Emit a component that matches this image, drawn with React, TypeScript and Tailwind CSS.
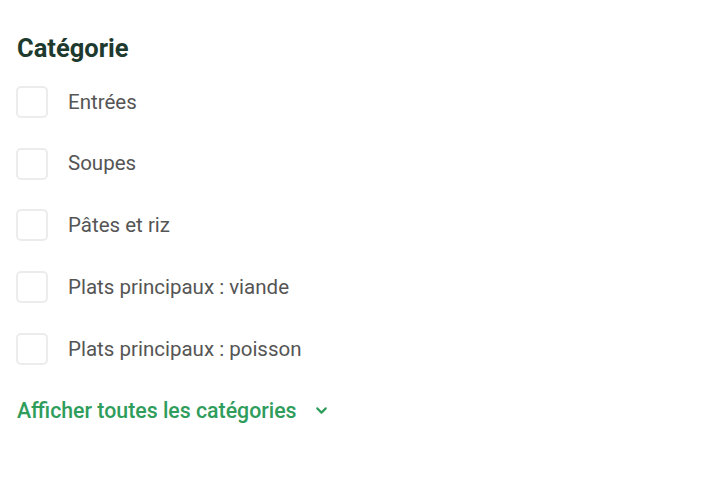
import { ChevronDown } from 'lucide-react';

const categories = [
  'Entrées',
  'Soupes',
  'Pâtes et riz',
  'Plats principaux : viande',
  'Plats principaux : poisson',
];

export default function App() {
  return (
    <div
      className="w-[720px] h-[478px] bg-white pl-4 pt-[31px]"
      style={{ fontFamily: 'Roboto, "Noto Sans", sans-serif' }}
    >
      {/* Heading */}
      <h2 className="pl-[1px] text-[25.5px] leading-[34px] font-bold text-[#1e3a2e]">Catégorie</h2>

      {/* Checkbox list */}
      <div className="mt-[6px] flex flex-col">
        {categories.map((label) => (
          <label key={label} className="flex h-[61.8px] items-center gap-5 cursor-pointer">
            <span className="h-8 w-8 shrink-0 rounded-[5px] border-2 border-[#ececec] bg-white" />
            <span className="text-[20.5px] text-[#555555]">{label}</span>
          </label>
        ))}
      </div>

      {/* Show all */}
      <button className="flex h-[61px] items-center gap-4 pl-[1px] text-[21.3px] font-medium text-[#2f9d5c]">
        Afficher toutes les catégories
        <ChevronDown className="h-[17px] w-[17px]" strokeWidth={3} />
      </button>
    </div>
  );
}
